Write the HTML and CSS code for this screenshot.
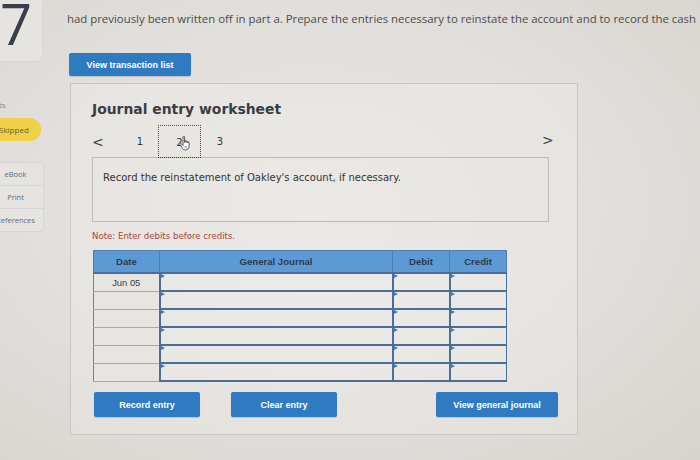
FILE: index.html
```html
<!DOCTYPE html>
<html>
<head>
<meta charset="utf-8">
<link rel="stylesheet" href="styles.css">
</head>
<body>
<div class="page">
  <aside class="side">
    <div class="qnum"><span>7</span></div>
    <div class="pts">ts</div>
    <div class="skipped">Skipped</div>
    <div class="tools">
      <div class="tool">eBook</div>
      <div class="tool">Print</div>
      <div class="tool">References</div>
    </div>
  </aside>
  <main class="main">
    <p class="prompt">had previously been written off in part a. Prepare the entries necessary to reinstate the account and to record the cash</p>
    <button class="btn btn-view">View transaction list</button>
    <section class="panel">
      <h2 class="title">Journal entry worksheet</h2>
      <div class="nav">
        <span class="arrow">&lt;</span>
        <span class="tab tab1">1</span>
        <span class="tab tab2">2
          <svg class="hand" viewBox="0 0 14 16" width="14" height="16"><path d="M5 10.5V2c0-.9 1.6-.9 1.6 0v5.5V6.2c0-.9 1.5-.9 1.5 0v1.3V6.8c0-.9 1.5-.9 1.5 0v1.2V7.6c0-.9 1.5-.9 1.5 0v3.4c0 2.4-1.4 3.9-3.4 3.9H7.2c-1.4 0-2.2-.7-2.9-1.9L2.1 9.6c-.5-.9.6-1.6 1.300-.9z" fill="#fff" stroke="#444" stroke-width="0.9" stroke-linejoin="round"/><path d="M7.2 11v2.2M8.7 11v2.2" stroke="#777" stroke-width="0.7"/></svg>
        </span>
        <span class="tab tab3">3</span>
        <span class="arrow next">&gt;</span>
      </div>
      <div class="instr">Record the reinstatement of Oakley's account, if necessary.</div>
      <p class="note">Note: Enter debits before credits.</p>
      <table class="journal">
        <thead>
          <tr><th class="c-date">Date</th><th class="c-gj">General Journal</th><th class="c-dr">Debit</th><th class="c-cr">Credit</th></tr>
        </thead>
        <tbody>
          <tr><td class="date">Jun 05</td><td class="in"></td><td class="in"></td><td class="in"></td></tr>
          <tr><td class="date"></td><td class="in"></td><td class="in"></td><td class="in"></td></tr>
          <tr><td class="date"></td><td class="in"></td><td class="in"></td><td class="in"></td></tr>
          <tr><td class="date"></td><td class="in"></td><td class="in"></td><td class="in"></td></tr>
          <tr><td class="date"></td><td class="in"></td><td class="in"></td><td class="in"></td></tr>
          <tr><td class="date"></td><td class="in"></td><td class="in"></td><td class="in"></td></tr>
        </tbody>
      </table>
      <div class="actions">
        <button class="btn btn-record">Record entry</button>
        <button class="btn btn-clear">Clear entry</button>
        <button class="btn btn-gj">View general journal</button>
      </div>
    </section>
  </main>
</div>
</body>
</html>
```
FILE: styles.css
```css
html, body {
  margin: 0;
  padding: 0;
}
body {
  width: 700px;
  height: 460px;
  overflow: hidden;
  background: radial-gradient(ellipse at 45% 45%, #e8e6e3 0%, #e1dfdb 55%, #d7d4cf 100%);
  font-family: "Liberation Sans", Arial, sans-serif;
  color: #333;
}
.page {
  display: flex;
  height: 460px;
}
.side {
  width: 67px;
  flex: none;
  display: flex;
  flex-direction: column;
  align-items: flex-start;
}
.qnum {
  width: 54px;
  height: 62px;
  margin-left: -11px;
  box-sizing: border-box;
  background: #e6e4e1;
  border: 1px solid #d9d7d3;
  border-top: none;
  border-radius: 0 0 7px 0;
  overflow: hidden;
}
.qnum span {
  display: block;
  font-family: "Open Sans", sans-serif;
  font-size: 56px;
  line-height: 50px;
  color: #3a3e48;
  margin-left: 10px;
  margin-top: -2px;
}
.pts {
  margin-top: 37px;
  font-family: "Open Sans", sans-serif;
  font-size: 8px;
  color: #8a8a8a;
  margin-left: -1px;
}
.skipped {
  margin-top: 8px;
  margin-left: -22px;
  width: 63px;
  height: 23px;
  box-sizing: border-box;
  border-radius: 12px;
  background: #eed148;
  font-family: "Open Sans", sans-serif;
  font-size: 8px;
  color: #6b5f2e;
  line-height: 23px;
  padding-left: 21px;
}
.tools {
  margin-top: 21px;
  margin-left: -13px;
  width: 57px;
  box-sizing: border-box;
  border: 1px solid #d7d5d1;
  border-radius: 4px;
  background: #e6e4e1;
}
.tool {
  height: 22px;
  line-height: 22px;
  text-align: center;
  font-family: "Open Sans", sans-serif;
  font-size: 7.5px;
  color: #5c6b80;
  border-bottom: 1px solid #d7d5d1;
}
.tool:last-child {
  border-bottom: none;
}
.main {
  flex: 1;
  min-width: 0;
}
.prompt {
  margin: 12px 0 0 0;
  font-family: "Open Sans", sans-serif;
  font-size: 11.4px;
  line-height: 14px;
  color: #4b4b4b;
  white-space: nowrap;
}
.btn {
  display: block;
  border: none;
  border-radius: 2px;
  background: #2f7bc1;
  color: #fff;
  font-family: "Liberation Sans", Arial, sans-serif;
  font-weight: bold;
  font-size: 9px;
  padding: 0;
  box-shadow: 0 1px 1px rgba(0,0,0,0.15);
}
.btn-view {
  margin: 27px 0 0 2px;
  width: 122px;
  height: 23px;
}
.panel {
  margin: 7px 0 0 3px;
  width: 508px;
  height: 352px;
  box-sizing: border-box;
  border: 1px solid #c9c7c3;
  background: rgba(240, 239, 236, 0.35);
  padding: 0 0 0 21px;
}
.title {
  margin: 17px 0 0 0;
  font-family: "DejaVu Sans", Verdana, sans-serif;
  font-weight: bold;
  font-size: 13.9px;
  line-height: 17px;
  color: #3a3d45;
}
.nav {
  margin-top: 7px;
  width: 465px;
  height: 33px;
  display: flex;
  align-items: center;
  font-family: "DejaVu Sans", Verdana, sans-serif;
  font-size: 10px;
  color: #333;
}
.arrow {
  font-family: "DejaVu Sans", sans-serif;
  font-size: 14px;
  color: #3a3d45;
  width: 30px;
  padding-left: 0;
  box-sizing: border-box;
}
.arrow.next {
  margin-left: auto;
  width: 15px;
  margin-top: -4px;
}
.tab {
  height: 33px;
  line-height: 33px;
  text-align: center;
  box-sizing: border-box;
}
.tab1 {
  width: 36px;
}
.tab2 {
  width: 43px;
  border: 1px dotted #3c4a66;
  position: relative;
}
.tab3 {
  width: 38px;
}
.hand {
  position: absolute;
  left: 19px;
  top: 9px;
}
.instr {
  width: 457px;
  height: 65px;
  margin: -1px 0 0 0;
  box-sizing: border-box;
  border: 1px solid #bdbbb7;
  padding: 14px 0 0 10px;
  font-family: "DejaVu Sans", Verdana, sans-serif;
  font-size: 10px;
  color: #333;
}
.note {
  margin: 9px 0 0 0;
  font-family: "DejaVu Sans", Verdana, sans-serif;
  font-size: 8.6px;
  color: #ad4343;
}
.journal {
  margin: 9px 0 0 1px;
  border-collapse: collapse;
  width: 409px;
  table-layout: fixed;
}
.journal th {
  height: 21px;
  padding: 0;
  background: #5d9ad5;
  color: #2b3a4e;
  font-family: "Liberation Sans", Arial, sans-serif;
  font-weight: bold;
  font-size: 9.6px;
  border: 1px solid #4a7fb5;
  border-bottom: 2px solid #4b6e98;
}
.c-date { width: 65px; }
.c-gj { width: 232px; }
.c-dr { width: 56px; }
.c-cr { width: 56px; }
.journal td {
  height: 16px;
  padding: 0;
}
.journal td.date {
  border: 1px solid #a9a8a6;
  border-left: 1px solid #7c7f86;
  text-align: center;
  font-size: 9.4px;
  color: #3a3a3a;
  background: #e6e5e2;
}
.journal td.in {
  border: 2px solid #4b6e98;
  border-top: none;
  border-right: 1px solid #4b6e98;
  position: relative;
  background: rgba(255,255,255,0.12);
}
.journal td.in::before {
  content: "";
  position: absolute;
  left: 0;
  top: 0;
  border-left: 4px solid #3f79bd;
  border-top: 2px solid transparent;
  border-bottom: 2px solid transparent;
}
.actions {
  margin-top: 10px;
  width: 466px;
  display: flex;
  align-items: flex-start;
}
.btn-record {
  margin-left: 2px;
  width: 106px;
  height: 25px;
}
.btn-clear {
  margin-left: 31px;
  width: 106px;
  height: 25px;
}
.btn-gj {
  margin-left: auto;
  width: 122px;
  height: 25px;
}
```
